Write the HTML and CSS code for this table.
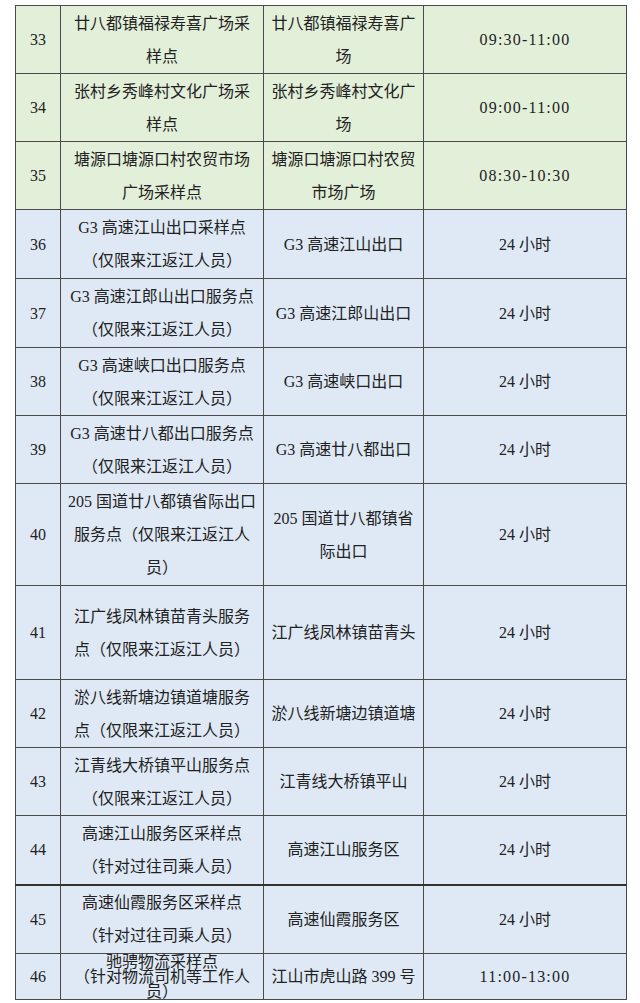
FILE: index.html
```html
<!DOCTYPE html>
<html lang="zh-CN">
<head>
<meta charset="utf-8">
<title>采样点</title>
<link rel="stylesheet" href="styles.css">
</head>
<body>
<table class="sites">
  <colgroup>
    <col class="c-num"><col class="c-name"><col class="c-addr"><col class="c-time">
  </colgroup>
  <tbody>
    <tr class="green r68">
      <td class="num">33</td>
      <td>廿八都镇福禄寿喜广场采<br>样点</td>
      <td>廿八都镇福禄寿喜广<br>场</td>
      <td class="time">09:30-11:00</td>
    </tr>
    <tr class="green r68">
      <td class="num">34</td>
      <td>张村乡秀峰村文化广场采<br>样点</td>
      <td>张村乡秀峰村文化广<br>场</td>
      <td class="time">09:00-11:00</td>
    </tr>
    <tr class="green r68">
      <td class="num">35</td>
      <td>塘源口塘源口村农贸市场<br>广场采样点</td>
      <td>塘源口塘源口村农贸<br>市场广场</td>
      <td class="time">08:30-10:30</td>
    </tr>
    <tr class="blue r69">
      <td class="num">36</td>
      <td>G3 高速江山出口采样点<br>（仅限来江返江人员）</td>
      <td>G3 高速江山出口</td>
      <td>24 小时</td>
    </tr>
    <tr class="blue r69">
      <td class="num">37</td>
      <td>G3 高速江郎山出口服务点<br>（仅限来江返江人员）</td>
      <td>G3 高速江郎山出口</td>
      <td>24 小时</td>
    </tr>
    <tr class="blue r68">
      <td class="num">38</td>
      <td>G3 高速峡口出口服务点<br>（仅限来江返江人员）</td>
      <td>G3 高速峡口出口</td>
      <td>24 小时</td>
    </tr>
    <tr class="blue r68">
      <td class="num">39</td>
      <td>G3 高速廿八都出口服务点<br>（仅限来江返江人员）</td>
      <td>G3 高速廿八都出口</td>
      <td>24 小时</td>
    </tr>
    <tr class="blue r102">
      <td class="num">40</td>
      <td>205 国道廿八都镇省际出口<br>服务点（仅限来江返江人<br>员）</td>
      <td>205 国道廿八都镇省<br>际出口</td>
      <td>24 小时</td>
    </tr>
    <tr class="blue r94">
      <td class="num">41</td>
      <td>江广线凤林镇苗青头服务<br>点（仅限来江返江人员）</td>
      <td>江广线凤林镇苗青头</td>
      <td>24 小时</td>
    </tr>
    <tr class="blue r68">
      <td class="num">42</td>
      <td>淤八线新塘边镇道塘服务<br>点（仅限来江返江人员）</td>
      <td>淤八线新塘边镇道塘</td>
      <td>24 小时</td>
    </tr>
    <tr class="blue r68">
      <td class="num">43</td>
      <td>江青线大桥镇平山服务点<br>（仅限来江返江人员）</td>
      <td>江青线大桥镇平山</td>
      <td>24 小时</td>
    </tr>
    <tr class="blue r69 thick">
      <td class="num">44</td>
      <td>高速江山服务区采样点<br>（针对过往司乘人员）</td>
      <td>高速江山服务区</td>
      <td>24 小时</td>
    </tr>
    <tr class="blue r69">
      <td class="num">45</td>
      <td>高速仙霞服务区采样点<br>（针对过往司乘人员）</td>
      <td>高速仙霞服务区</td>
      <td>24 小时</td>
    </tr>
    <tr class="blue r46">
      <td class="num">46</td>
      <td class="tight">驰骋物流采样点<br>（针对物流司机等工作人<br>员）</td>
      <td>江山市虎山路 399 号</td>
      <td class="time">11:00-13:00</td>
    </tr>
  </tbody>
</table>
</body>
</html>
```

FILE: styles.css
```css
html, body {
  margin: 0;
  padding: 0;
  background: #ffffff;
}

body {
  padding: 5px 0 0 15px;
  font-family: "Liberation Serif", "Noto Sans CJK SC", serif;
  font-size: 16px;
  color: #222222;
}

.sites {
  border-collapse: collapse;
  table-layout: fixed;
  width: 611px;
}

.c-num { width: 45px; }
.c-name { width: 203px; }
.c-addr { width: 160px; }
.c-time { width: 203px; }

.sites td {
  border: 1px solid #4a4a4a;
  padding: 0;
  text-align: center;
  vertical-align: middle;
  line-height: 33px;
  white-space: nowrap;
  overflow: visible;
}

.green td { background: #e2efd9; }
.blue td { background: #dee9f5; }

.thick td { border-bottom: 2px solid #333333; }

.r46 { height: 46px; }
.r68 { height: 68px; }
.r69 { height: 69px; }
.r94 { height: 94px; }
.r102 { height: 102px; }

.num {
  font-size: 16px;
}

.time {
  letter-spacing: 1.2px;
}

.sites td.tight {
  line-height: 15px;
}
```
